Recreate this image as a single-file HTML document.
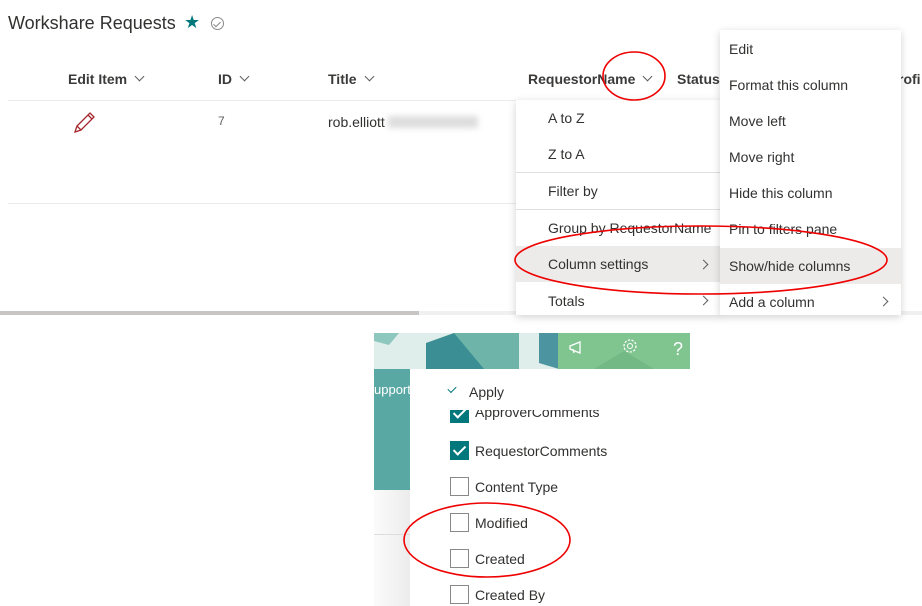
<!DOCTYPE html>
<html><head><meta charset="utf-8"><style>
*{margin:0;padding:0;box-sizing:border-box}
body{width:922px;height:606px;background:#fff;font-family:"Liberation Sans",sans-serif;color:#323130;position:relative;overflow:hidden}
.a{position:absolute;white-space:nowrap}
.h{font-size:14px;font-weight:bold;color:#3b3a39}
.chev{display:inline-block;width:7px;height:7px;border-right:1px solid #605e5c;border-bottom:1px solid #605e5c;transform:rotate(45deg);margin-left:9px;position:relative;top:-4px}
.menu{position:absolute;background:#fff;box-shadow:0 2px 8px rgba(0,0,0,.18)}
.mi{position:absolute;left:0;right:0;height:36px;line-height:36px;font-size:14px;color:#323130}
.sep{position:absolute;left:0;right:0;height:1px;background:#e1dfdd}
.rch{position:absolute;width:7px;height:7px;border-right:1px solid #605e5c;border-top:1px solid #605e5c;transform:rotate(45deg)}
.cb{position:absolute;left:450px;width:19px;height:19px;border:1px solid #8a8886;background:#fff}
.cb.on{background:#03787c;border-color:#03787c}
.cb.on:after{content:"";position:absolute;left:5px;top:1px;width:5px;height:10px;border-right:2px solid #fff;border-bottom:2px solid #fff;transform:rotate(45deg)}
.lbl{position:absolute;left:475px;font-size:14px;color:#323130}
</style></head><body>
<div class="a" style="left:8px;top:13px;font-size:18px;color:#323130">Workshare Requests</div>
<div class="a" style="left:184px;top:12px;font-size:18px;color:#03787c">★</div>
<div class="a" style="left:211px;top:17px;width:13px;height:13px;border:1px solid #8a8886;border-radius:50%"></div>
<div class="a" style="left:215px;top:20px;width:4px;height:7px;border-right:1px solid #8a8886;border-bottom:1px solid #8a8886;transform:rotate(45deg)"></div>
<div class="a h" style="left:68px;top:71px">Edit Item<span class="chev"></span></div>
<div class="a h" style="left:218px;top:71px">ID<span class="chev"></span></div>
<div class="a h" style="left:328px;top:71px">Title<span class="chev"></span></div>
<div class="a h" style="left:528px;top:71px">RequestorName<span class="chev"></span></div>
<div class="a h" style="left:677px;top:71px">Status</div>
<div class="a h" style="left:898px;top:71px">rofi</div>
<div class="a" style="left:8px;top:100px;width:512px;height:1px;background:#edebe9"></div>
<div class="a" style="left:8px;top:203px;width:512px;height:1px;background:#edebe9"></div>
<svg class="a" style="left:73px;top:111px" width="24" height="24" viewBox="0 0 24 24"><path d="M2 21 L4 15 L17 2 L21 6 L8 19 Z M4 15 L8 19 M15 4 L19 8" fill="none" stroke="#a4262c" stroke-width="1.3"/></svg>
<div class="a" style="left:218px;top:114px;font-size:12px;color:#605e5c">7</div>
<div class="a" style="left:328px;top:114px;font-size:14px">rob.elliott</div>
<div class="a" style="left:388px;top:116px;width:90px;height:12px;background:#ddd;filter:blur(3px)"></div>
<div class="a" style="left:0;top:311px;width:922px;height:4px;background:#f0f0f0"></div>
<div class="a" style="left:0;top:311px;width:419px;height:4px;background:#c8c6c4"></div>
<div class="menu" style="left:516px;top:100px;width:205px;height:215px">
<div class="mi" style="top:0;padding-left:32px">A to Z</div>
<div class="mi" style="top:36px;padding-left:32px">Z to A</div>
<div class="sep" style="top:72px"></div>
<div class="mi" style="top:73px;padding-left:32px">Filter by</div>
<div class="sep" style="top:109px"></div>
<div class="mi" style="top:110px;padding-left:32px">Group by RequestorName</div>
<div class="mi" style="top:146px;padding-left:32px;background:#edebe9">Column settings</div>
<div class="rch" style="left:184px;top:161px"></div>
<div class="mi" style="top:183px;padding-left:32px">Totals</div>
<div class="rch" style="left:184px;top:197px"></div>
</div>
<div class="menu" style="left:720px;top:30px;width:181px;height:285px">
<div class="mi" style="top:1px;padding-left:9px">Edit</div>
<div class="mi" style="top:37px;padding-left:9px">Format this column</div>
<div class="mi" style="top:73px;padding-left:9px">Move left</div>
<div class="mi" style="top:109px;padding-left:9px">Move right</div>
<div class="mi" style="top:145px;padding-left:9px">Hide this column</div>
<div class="mi" style="top:181px;padding-left:9px">Pin to filters pane</div>
<div class="mi" style="top:218px;padding-left:9px;background:#edebe9">Show/hide columns</div>
<div class="mi" style="top:254px;padding-left:9px">Add a column</div>
<div class="rch" style="left:160px;top:268px"></div>
</div>
<svg class="a" style="left:374px;top:333px" width="316" height="36" viewBox="0 0 316 36">
<rect width="316" height="36" fill="#dfeeea"/>
<polygon points="0,0 25,0 15,12 0,8" fill="#8ec7bd"/>
<polygon points="52,10 80,0 110,0 110,36 52,36" fill="#3b8f94"/>
<polygon points="80,0 145,0 145,36 110,36" fill="#6fb4a8"/>
<polygon points="165,0 185,0 185,36 165,30" fill="#4b94a0"/>
<rect x="184" width="132" height="36" fill="#80c490"/>
<polygon points="220,36 250,18 280,36" fill="#72b986"/>
<path d="M196 13 L206 9 L206 20 L196 16 Z M199 16 L200 20" fill="none" stroke="#fff" stroke-width="1.3"/>
<circle cx="256" cy="13" r="6" fill="none" stroke="#fff" stroke-width="1.3" stroke-dasharray="2.2 1.5"/>
<circle cx="256" cy="13" r="2.5" fill="none" stroke="#fff"/>
<text x="299" y="22" font-size="18" fill="#fff" font-family="Liberation Sans">?</text>
</svg>
<div class="a" style="left:374px;top:369px;width:36px;height:121px;background:#5aa8a4"></div>
<div class="a" style="left:374px;top:382px;font-size:13px;color:#fff;width:36px;overflow:hidden">upport</div>
<div class="a" style="left:374px;top:490px;width:36px;height:116px;background:linear-gradient(90deg,#fbfbfb,#ececec)"></div>
<div class="a" style="left:374px;top:534px;width:36px;height:1px;background:#ddd"></div>
<div class="a" style="left:448px;top:386px;width:8px;height:5px;border-left:1px solid #03787c;border-bottom:1px solid #03787c;transform:rotate(-45deg)"></div>
<div class="a" style="left:469px;top:384px;font-size:14px">Apply</div>
<div style="position:absolute;left:410px;top:410px;width:280px;height:16px;overflow:hidden">
<div class="cb on" style="left:40px;top:-6px"></div><div class="lbl" style="left:65px;top:-6px">ApproverComments</div></div>
<div class="cb on" style="top:441px"></div><div class="lbl" style="top:443px">RequestorComments</div>
<div class="cb" style="top:477px"></div><div class="lbl" style="top:479px">Content Type</div>
<div class="cb" style="top:513px"></div><div class="lbl" style="top:515px">Modified</div>
<div class="cb" style="top:549px"></div><div class="lbl" style="top:551px">Created</div>
<div class="cb" style="top:585px"></div><div class="lbl" style="top:587px">Created By</div>
<svg class="a" style="left:0;top:0" width="922" height="606">
<g fill="none" stroke="#e00" stroke-width="1.6">
<ellipse cx="634" cy="76" rx="31" ry="24"/>
<ellipse cx="701" cy="260" rx="186" ry="34"/>
<ellipse cx="487" cy="540" rx="83" ry="37"/>
</g></svg>
</body></html>
